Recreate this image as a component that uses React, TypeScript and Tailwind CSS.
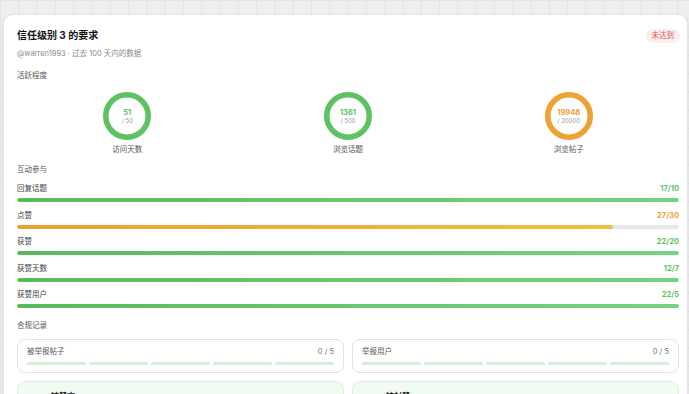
const rings = [
  { value: "51", target: "/ 50", label: "访问天数", color: "#5cc262", pct: 1 },
  { value: "1361", target: "/ 500", label: "浏览话题", color: "#5cc262", pct: 1 },
  { value: "19948", target: "/ 20000", label: "浏览帖子", color: "#eda232", pct: 0.997 },
];

const rows = [
  { label: "回复话题", value: "17/10", pct: 1, warn: false },
  { label: "点赞", value: "27/30", pct: 0.9, warn: true },
  { label: "获赞", value: "22/20", pct: 1, warn: false },
  { label: "获赞天数", value: "12/7", pct: 1, warn: false },
  { label: "获赞用户", value: "22/5", pct: 1, warn: false },
];

function Ring({ value, target, label, color, pct }: (typeof rings)[number]) {
  const r = 21.25;
  const c = 2 * Math.PI * r;
  return (
    <div className="flex flex-col items-center">
      <div className="relative w-[48px] h-[48px]">
        <svg width="48" height="48" viewBox="0 0 48 48" className="-rotate-90">
          <circle cx="24" cy="24" r={r} fill="none" stroke="#ececec" strokeWidth="5.5" />
          <circle
            cx="24"
            cy="24"
            r={r}
            fill="none"
            stroke={color}
            strokeWidth="5.5"
            strokeDasharray={`${c * pct} ${c}`}
          />
        </svg>
        <div className="absolute inset-0 flex flex-col items-center justify-center">
          <span className="text-[7.5px] leading-[8px] font-bold" style={{ color }}>
            {value}
          </span>
          <span className="text-[6px] leading-[7px] text-[#9a9a9a]">{target}</span>
        </div>
      </div>
      <div className="mt-[5px] h-[10px] leading-[10px] text-[7.5px] text-[#555]">{label}</div>
    </div>
  );
}

function Bar({ label, value, pct, warn }: (typeof rows)[number]) {
  return (
    <div className="flex flex-col mb-[8.5px]">
      <div className="flex justify-between h-[10px] leading-[10px] text-[7.5px]">
        <span className="text-[#444]">{label}</span>
        <span className={warn ? "font-bold text-[#eda232]" : "font-bold text-[#5cc262]"}>{value}</span>
      </div>
      <div className="mt-[4px] h-[4px] rounded-full bg-[#e8e8e8] overflow-hidden">
        <div
          className={
            warn
              ? "h-full rounded-full bg-gradient-to-r from-[#e9a031] to-[#f3bf3f]"
              : "h-full rounded-full bg-gradient-to-r from-[#57bb5c] to-[#74d482]"
          }
          style={{ width: `${pct * 100}%` }}
        />
      </div>
    </div>
  );
}

function ReportCard({ title }: { title: string }) {
  return (
    <div className="flex-1 h-[34px] rounded-lg border border-[#e2e2e2] px-[9px] pt-[7px]">
      <div className="flex justify-between h-[10px] leading-[10px] text-[7.5px] text-[#555]">
        <span>{title}</span>
        <span className="text-[#777]">0 / 5</span>
      </div>
      <div className="mt-[5px] flex gap-[3px]">
        {[0, 1, 2, 3, 4].map((i) => (
          <div key={i} className="flex-1 h-[3px] rounded-full bg-[#d6eed8]" />
        ))}
      </div>
    </div>
  );
}

function StatusCard({ title }: { title: string }) {
  return (
    <div className="flex-1 h-[40px] rounded-lg border border-[#dcf1dd] bg-[#f1fbf1] pl-[9px] pt-[8px] flex gap-[10px]">
      <div className="w-[14px] h-[14px] mt-[1px] rounded-full bg-[#dcefdc] shrink-0 translate-y-[4px]" />
      <div className="text-[8px] leading-[10px] font-bold text-[#222] mt-[1px]">{title}</div>
    </div>
  );
}

export default function App() {
  return (
    <div
      className="h-[394px] w-[689px] overflow-hidden bg-[#efefef] bg-[linear-gradient(to_right,#e4e4e4_1px,transparent_1px),linear-gradient(to_bottom,#e4e4e4_1px,transparent_1px)] bg-[size:18.3px_18.3px] pl-[3px] pr-[1px] pt-[14px]"
      style={{ fontFamily: 'Inter, "Noto Sans CJK SC", sans-serif' }}
    >
      <div className="h-[420px] rounded-[10px] bg-white border border-[#e6e6e6] shadow-sm pl-[13px] pr-[8px] pt-[13px] flex flex-col">
        {/* Header */}
        <div className="flex items-center justify-between h-[14px]">
          <h1 className="text-[10px] leading-[14px] font-bold text-[#111]">信任级别 3 的要求</h1>
          <span className="h-[14px] px-[6px] rounded-full bg-[#fdeded] text-[7.5px] leading-[14px] text-[#d9534f] mr-[-1px] translate-y-[1px]">
            未达到
          </span>
        </div>
        <div className="mt-[7px] h-[10px] leading-[10px] text-[7.5px] text-[#8a8a8a]">
          @warren1993 · 过去 100 天内的数据
        </div>

        {/* Activity */}
        <div className="mt-[12px] h-[10px] leading-[10px] text-[7.5px] text-[#555]">活跃程度</div>
        <div className="mt-[11px] grid grid-cols-3 justify-items-center">
          {rings.map((r) => (
            <Ring key={r.label} {...r} />
          ))}
        </div>

        {/* Interaction */}
        <div className="mt-[10px] h-[10px] leading-[10px] text-[7.5px] text-[#555]">互动参与</div>
        <div className="mt-[9px] flex flex-col">
          {rows.map((r) => (
            <Bar key={r.label} {...r} />
          ))}
        </div>

        {/* Compliance */}
        <div className="mt-[4.5px] h-[10px] leading-[10px] text-[7.5px] text-[#555]">合规记录</div>
        <div className="mt-[8px] flex gap-[8px]">
          <ReportCard title="被举报帖子" />
          <ReportCard title="举报用户" />
        </div>
        <div className="mt-[8px] flex gap-[8px]">
          <StatusCard title="被禁言" />
          <StatusCard title="被封禁" />
        </div>
      </div>
    </div>
  );
}
